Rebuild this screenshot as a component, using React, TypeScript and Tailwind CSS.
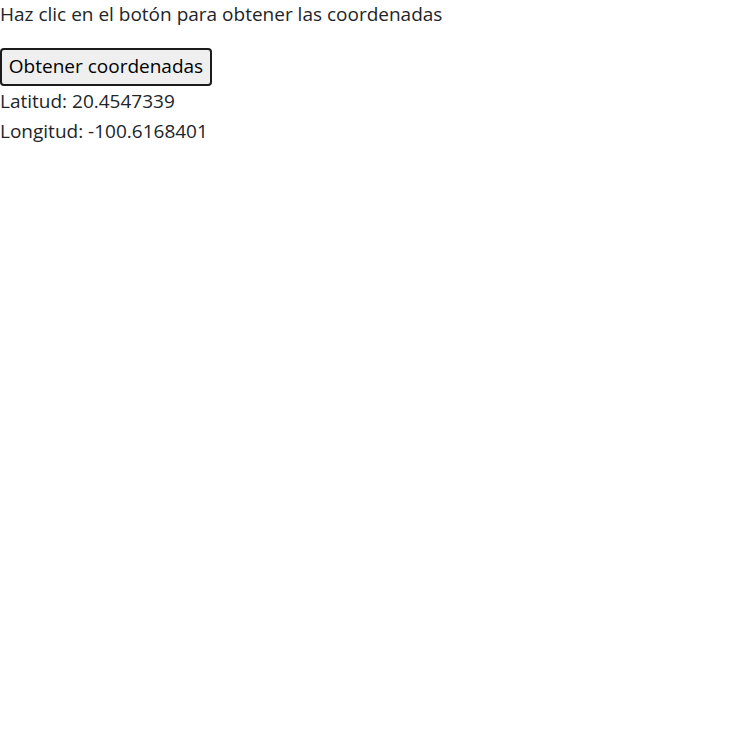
const coords = { lat: "20.4547339", lng: "-100.6168401" };

export default function App() {
  return (
    <div className="font-['Open_Sans',sans-serif] text-[19px] text-[#212529]">
      <p className="mb-[20px] leading-[28px]">Haz clic en el botón para obtener las coordenadas</p>
      <button
        type="button"
        className="block w-[212px] rounded-[4px] border-2 border-[#1b1b1b] bg-[#efefef] pt-[2px] pb-[4px] text-center leading-[28px] text-black"
      >
        Obtener coordenadas
      </button>
      <p className="leading-[30px]">Latitud: {coords.lat}</p>
      <p className="leading-[30px]">Longitud: {coords.lng}</p>
    </div>
  );
}
